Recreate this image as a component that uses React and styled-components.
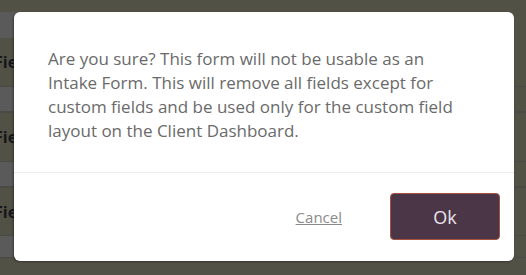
import React from "react";
import styled, { createGlobalStyle } from "styled-components";

const Global = createGlobalStyle`
  html, body { margin: 0; padding: 0; }
  body { font-family: "Open Sans", "Liberation Sans", sans-serif; background: #525145; }
  * { box-sizing: border-box; }
`;

const Page = styled.div`
  position: relative;
  width: 526px;
  height: 275px;
  overflow: hidden;
  background: #525145;
  display: flex;
  flex-direction: column;
`;

const Header = styled.div`
  height: 12px;
  flex: none;
`;

const Row = styled.div`
  flex: none;
  height: ${(p) => p.$h}px;
  display: flex;
  align-items: center;
  border-bottom: ${(p) => (p.$line ? `${p.$line}px solid #4a4a44` : "none")};
`;

const GrayCell = styled.div`
  width: 300px;
  height: 100%;
  background: #5a5a5a;
`;

const RowText = styled.span`
  margin-left: -6px;
  font-family: "Open Sans", "Liberation Sans", sans-serif;
  font-weight: 700;
  font-size: 16px;
  color: #15161a;
`;

const Overlay = styled.div`
  position: absolute;
  inset: 0;
  display: flex;
  align-items: flex-start;
  padding: 12px 0 0 14px;
`;

const Modal = styled.div`
  width: 500px;
  height: 249px;
  background: #fff;
  border-radius: 6px;
  box-shadow: -1px 1px 2px rgba(0, 0, 0, 0.35);
  display: flex;
  flex-direction: column;
  overflow: hidden;
`;

const Body = styled.div`
  padding: 35px 44px 29px 34px;
  border-bottom: 1px solid #ececec;
`;

const Message = styled.p`
  margin: 0;
  font-size: 17px;
  line-height: 24px;
  color: #6a6a6a;
`;

const Footer = styled.div`
  flex: 1;
  display: flex;
  align-items: center;
  justify-content: flex-end;
  gap: 48px;
  padding: 0 14px 1px 0;
`;

const CancelLink = styled.button`
  background: none;
  border: none;
  padding: 0;
  font-family: "Open Sans", "Liberation Sans", sans-serif;
  font-size: 15px;
  color: #8a8a8a;
  text-decoration: underline;
  cursor: pointer;
`;

const OkButton = styled.button`
  width: 110px;
  height: 47px;
  background: #4b3647;
  border: 1px solid #a5533c;
  border-radius: 4px;
  color: #ece4ea;
  font-family: "Open Sans", "Liberation Sans", sans-serif;
  font-size: 18px;
  cursor: pointer;
`;

export default function App() {
  return (
    <>
      <Global />
      <Page>
        <Header />
        <Row $h={26} $line={0}>
          <GrayCell />
        </Row>
        <Row $h={49} $line={1}>
          <RowText>Field</RowText>
        </Row>
        <Row $h={26} $line={2}>
          <GrayCell />
        </Row>
        <Row $h={49} $line={1}>
          <RowText>Field</RowText>
        </Row>
        <Row $h={26} $line={2}>
          <GrayCell />
        </Row>
        <Row $h={48} $line={1}>
          <RowText>Field</RowText>
        </Row>
        <Row $h={22} $line={1}>
          <GrayCell />
        </Row>
        <Overlay>
          <Modal>
            <Body>
              <Message>
                Are you sure? This form will not be usable as an Intake Form. This will remove all
                fields except for custom fields and be used only for the custom field layout on the
                Client Dashboard.
              </Message>
            </Body>
            <Footer>
              <CancelLink>Cancel</CancelLink>
              <OkButton>Ok</OkButton>
            </Footer>
          </Modal>
        </Overlay>
      </Page>
    </>
  );
}
